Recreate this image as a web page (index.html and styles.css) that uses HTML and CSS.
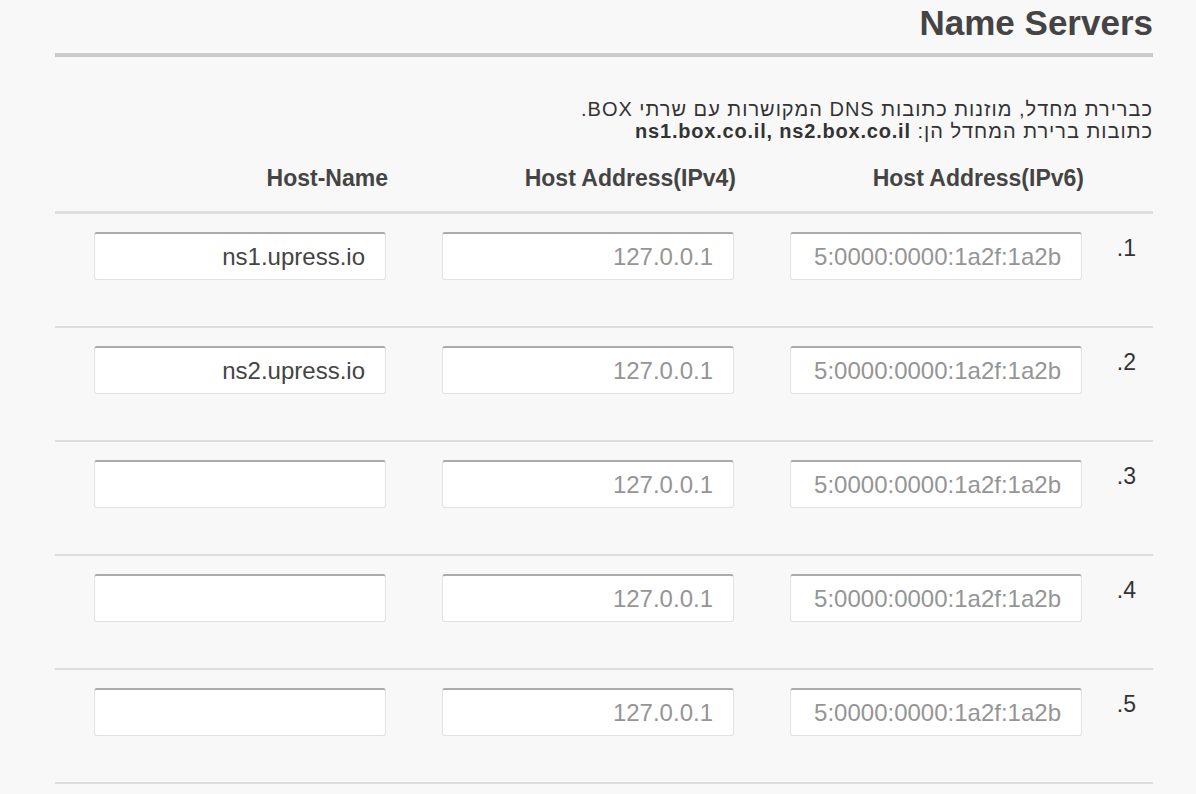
FILE: index.html
```html
<!DOCTYPE html>
<html lang="he" dir="rtl">
<head>
<meta charset="utf-8">
<title>Name Servers</title>
<link rel="stylesheet" href="styles.css">
</head>
<body>
<div class="page">
  <h2 class="title"><span dir="ltr">Name Servers</span></h2>
  <p class="intro">כברירת מחדל, מוזנות כתובות DNS המקושרות עם שרתי BOX.<br>כתובות ברירת המחדל הן: <b>ns1.box.co.il, ns2.box.co.il</b></p>
  <div class="ns-table">
    <div class="row head">
      <div class="num"></div>
      <div class="label"><span dir="ltr">Host Address(IPv6)</span></div>
      <div class="label"><span dir="ltr">Host Address(IPv4)</span></div>
      <div class="label"><span dir="ltr">Host-Name</span></div>
    </div>
    <div class="row">
      <div class="num">1.</div>
      <div class="cell"><input class="field" dir="ltr" type="text" placeholder="5:0000:0000:1a2f:1a2b"></div>
      <div class="cell"><input class="field" dir="ltr" type="text" placeholder="127.0.0.1"></div>
      <div class="cell"><input class="field" dir="ltr" type="text" value="ns1.upress.io"></div>
    </div>
    <div class="row">
      <div class="num">2.</div>
      <div class="cell"><input class="field" dir="ltr" type="text" placeholder="5:0000:0000:1a2f:1a2b"></div>
      <div class="cell"><input class="field" dir="ltr" type="text" placeholder="127.0.0.1"></div>
      <div class="cell"><input class="field" dir="ltr" type="text" value="ns2.upress.io"></div>
    </div>
    <div class="row">
      <div class="num">3.</div>
      <div class="cell"><input class="field" dir="ltr" type="text" placeholder="5:0000:0000:1a2f:1a2b"></div>
      <div class="cell"><input class="field" dir="ltr" type="text" placeholder="127.0.0.1"></div>
      <div class="cell"><input class="field" dir="ltr" type="text"></div>
    </div>
    <div class="row">
      <div class="num">4.</div>
      <div class="cell"><input class="field" dir="ltr" type="text" placeholder="5:0000:0000:1a2f:1a2b"></div>
      <div class="cell"><input class="field" dir="ltr" type="text" placeholder="127.0.0.1"></div>
      <div class="cell"><input class="field" dir="ltr" type="text"></div>
    </div>
    <div class="row">
      <div class="num">5.</div>
      <div class="cell"><input class="field" dir="ltr" type="text" placeholder="5:0000:0000:1a2f:1a2b"></div>
      <div class="cell"><input class="field" dir="ltr" type="text" placeholder="127.0.0.1"></div>
      <div class="cell"><input class="field" dir="ltr" type="text"></div>
    </div>
  </div>
</div>
</body>
</html>
```

FILE: styles.css
```css
html, body {
  margin: 0;
  padding: 0;
  background: #f8f8f8;
}
body {
  font-family: "Liberation Sans", Arial, "DejaVu Sans", sans-serif;
  color: #333;
  overflow: hidden;
}
.page {
  width: 1098px;
  margin-right: 43px;
  padding-top: 3px;
}
.title {
  margin: 0;
  font-size: 35px;
  line-height: 40px;
  font-weight: bold;
  color: #444;
  padding-bottom: 10px;
  border-bottom: 4px solid #cbcbcb;
}
.intro {
  margin: 41px 0 0;
  font-size: 20px;
  line-height: 22px;
  letter-spacing: 1px;
  color: #333;
}
.intro b {
  letter-spacing: 0.8px;
}
.ns-table {
  display: flex;
  flex-direction: column;
}
.row {
  display: flex;
  align-items: flex-start;
  padding: 18px 0 46px;
  border-bottom: 2px solid #dedede;
}
.row.head {
  padding: 22px 0 19px;
  border-bottom: 3px solid #dedede;
}
.num {
  flex: 0 0 71px;
  box-sizing: border-box;
  font-size: 23px;
  line-height: 28px;
  color: #333;
  padding-right: 17px;
  padding-top: 2px;
}
.label,
.cell {
  flex: 0 0 292px;
}
.label + .label,
.cell + .cell {
  margin-right: 56px;
}
.label {
  font-size: 23px;
  line-height: 28px;
  font-weight: bold;
  color: #444;
  text-align: right;
  position: relative;
  left: 2px;
}
.cell {
  display: flex;
}
.field {
  box-sizing: border-box;
  width: 292px;
  height: 48px;
  margin: 0;
  padding: 0 20px;
  font-family: "Liberation Sans", Arial, sans-serif;
  font-size: 24px;
  color: #444;
  background: #fff;
  border: 1px solid #dfe3e8;
  border-top: 2px solid #ababab;
  border-radius: 3px;
  text-align: right;
  outline: none;
}
.field::placeholder {
  color: #959595;
  opacity: 1;
}
```
